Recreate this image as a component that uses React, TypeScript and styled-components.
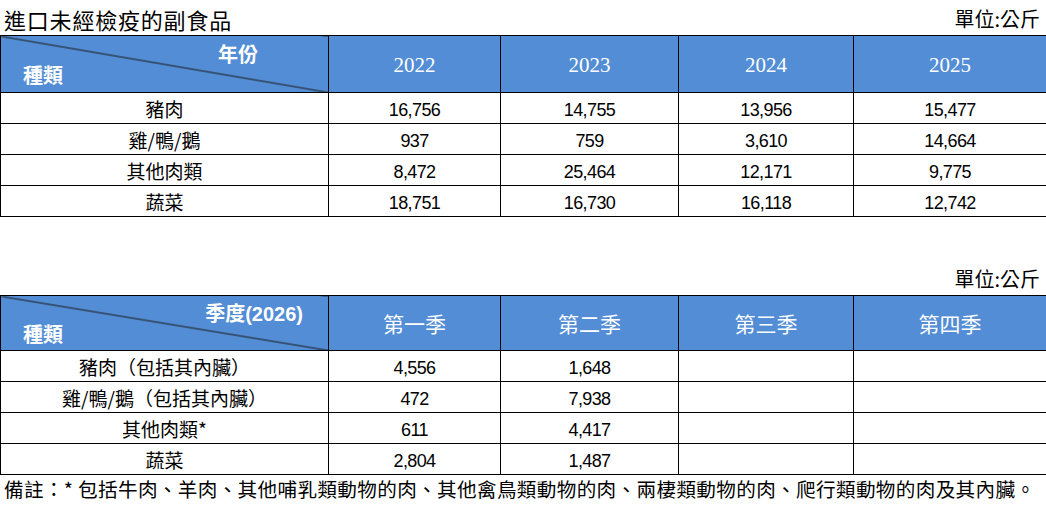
import React from "react";
import styled, { createGlobalStyle } from "styled-components";

const GlobalStyle = createGlobalStyle`
  body {
    margin: 0;
    background: #ffffff;
    font-family: "Noto Sans CJK TC", "Liberation Sans", sans-serif;
    color: #000;
  }
`;

const Page = styled.div`
  width: 1046px;
  display: flex;
  flex-direction: column;
`;

const CaptionRow = styled.div<{ $top: number }>`
  display: flex;
  justify-content: space-between;
  align-items: flex-end;
  height: 35px;
  margin-top: ${(p) => p.$top}px;
  padding: 0 6px 2px 4px;
  box-sizing: border-box;
`;

const Title = styled.div`
  font-size: 22px;
  letter-spacing: 0.8px;
  line-height: 28px;
`;

const Unit = styled.div`
  font-size: 20px;
  line-height: 28px;
`;

const Table = styled.table`
  width: 1046px;
  border-collapse: collapse;
  table-layout: fixed;
`;

const HeadRow = styled.tr<{ $height: number }>`
  height: ${(p) => p.$height}px;
`;

const HeadCell = styled.th`
  background: #538dd5;
  color: #fff;
  border: 1px solid #000;
  font-weight: 400;
  font-size: 21px;
  line-height: 1;
  text-align: center;
  padding: 0;
`;

const YearText = styled.span`
  font-family: "Liberation Serif", serif;
  font-size: 21px;
`;

const CornerCell = styled.th`
  padding: 0;
  border: 1px solid #000;
  background: linear-gradient(
    to top right,
    #538dd5 calc(50% - 1px),
    #1a1a1a 50%,
    #538dd5 calc(50% + 1px)
  );
  color: #fff;
`;

const CornerInner = styled.div<{ $pad: number }>`
  display: flex;
  flex-direction: column;
  padding: 2px ${(p) => p.$pad}px 0 22px;
  font-size: 20px;
  font-weight: 700;
  line-height: 20px;
`;

const CornerTop = styled.span`
  align-self: flex-end;
  font-family: "Liberation Sans", "Noto Sans CJK TC", sans-serif;
`;

const CornerBottom = styled.span`
  align-self: flex-start;
`;

const Row = styled.tr`
  height: 31px;
`;

const Cell = styled.td`
  border: 1px solid #000;
  text-align: center;
  padding: 0;
  font-size: 19px;
  line-height: 1;
`;

const Num = styled.span`
  font-family: "Liberation Sans", sans-serif;
  font-size: 18px;
  letter-spacing: -0.6px;
`;

const Note = styled.div`
  font-size: 19.6px;
  letter-spacing: 0.35px;
  line-height: 28px;
  padding-left: 4px;
  white-space: nowrap;
`;

const colWidths = [328, 172, 178, 175, 193];

const Cols = () => (
  <colgroup>
    {colWidths.map((w, i) => (
      <col key={i} style={{ width: w }} />
    ))}
  </colgroup>
);

const yearRows: [string, string[]][] = [
  ["豬肉", ["16,756", "14,755", "13,956", "15,477"]],
  ["雞/鴨/鵝", ["937", "759", "3,610", "14,664"]],
  ["其他肉類", ["8,472", "25,464", "12,171", "9,775"]],
  ["蔬菜", ["18,751", "16,730", "16,118", "12,742"]],
];

const quarterRows: [string, string[]][] = [
  ["豬肉（包括其內臟）", ["4,556", "1,648", "", ""]],
  ["雞/鴨/鵝（包括其內臟）", ["472", "7,938", "", ""]],
  ["其他肉類*", ["611", "4,417", "", ""]],
  ["蔬菜", ["2,804", "1,487", "", ""]],
];

const Body = ({ rows }: { rows: [string, string[]][] }) => (
  <tbody>
    {rows.map(([name, vals]) => (
      <Row key={name}>
        <Cell>{name}</Cell>
        {vals.map((v, i) => (
          <Cell key={i}>
            <Num>{v}</Num>
          </Cell>
        ))}
      </Row>
    ))}
  </tbody>
);

export default function App() {
  return (
    <Page>
      <GlobalStyle />
      <CaptionRow $top={0}>
        <Title>進口未經檢疫的副食品</Title>
        <Unit>單位:公斤</Unit>
      </CaptionRow>
      <Table>
        <Cols />
        <thead>
          <HeadRow $height={57}>
            <CornerCell>
              <CornerInner $pad={70}>
                <CornerTop>年份</CornerTop>
                <CornerBottom>種類</CornerBottom>
              </CornerInner>
            </CornerCell>
            {["2022", "2023", "2024", "2025"].map((y) => (
              <HeadCell key={y}>
                <YearText>{y}</YearText>
              </HeadCell>
            ))}
          </HeadRow>
        </thead>
        <Body rows={yearRows} />
      </Table>

      <CaptionRow $top={43}>
        <span />
        <Unit>單位:公斤</Unit>
      </CaptionRow>
      <Table>
        <Cols />
        <thead>
          <HeadRow $height={55}>
            <CornerCell>
              <CornerInner $pad={25}>
                <CornerTop>季度(2026)</CornerTop>
                <CornerBottom>種類</CornerBottom>
              </CornerInner>
            </CornerCell>
            {["第一季", "第二季", "第三季", "第四季"].map((q) => (
              <HeadCell key={q}>{q}</HeadCell>
            ))}
          </HeadRow>
        </thead>
        <Body rows={quarterRows} />
      </Table>
      <Note>
        備註：* 包括牛肉、羊肉、其他哺乳類動物的肉、其他禽鳥類動物的肉、兩棲類動物的肉、爬行類動物的肉及其內臟。
      </Note>
    </Page>
  );
}
